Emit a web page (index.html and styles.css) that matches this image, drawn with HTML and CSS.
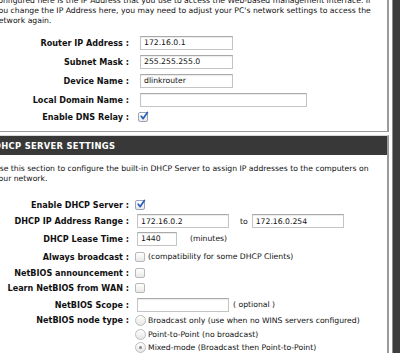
FILE: index.html
```html
<!DOCTYPE html>
<html lang="en">
<head>
  <meta charset="UTF-8" />
  <title>Network Settings</title>
  <link rel="stylesheet" href="styles.css">
</head>
<body>
  <div class="page">
    <div class="box first">
      <p class="intro">Use this section to configure the internal network settings of your router. The IP Address that is<br>configured here is the IP Address that you use to access the Web-based management interface. If<br>you change the IP Address here, you may need to adjust your PC's network settings to access the<br>network again.</p>

      <div class="row tall">
        <label>Router IP Address :</label>
        <input type="text" class="ip" value="172.16.0.1">
      </div>
      <div class="row tall">
        <label>Subnet Mask :</label>
        <input type="text" class="ip" value="255.255.255.0">
      </div>
      <div class="row tall">
        <label>Device Name :</label>
        <input type="text" class="ip" value="dlinkrouter">
      </div>
      <div class="row tall">
        <label>Local Domain Name :</label>
        <input type="text" class="wide" value="">
      </div>
      <div class="row short">
        <label>Enable DNS Relay :</label>
        <span class="chk on"><svg viewBox="0 0 10 10" width="10" height="10"><path d="M2.2 5.2 L4.2 7.6 L8.4 1.4" fill="none" stroke="#2a5fb8" stroke-width="1.7" stroke-linecap="round" stroke-linejoin="round"/></svg></span>
      </div>
    </div>

    <div class="box second">
      <h2>DHCP SERVER SETTINGS</h2>
      <p class="intro">Use this section to configure the built-in DHCP Server to assign IP addresses to the computers on<br>your network.</p>

      <div class="row short">
        <label>Enable DHCP Server :</label>
        <span class="chk on"><svg viewBox="0 0 10 10" width="10" height="10"><path d="M2.2 5.2 L4.2 7.6 L8.4 1.4" fill="none" stroke="#2a5fb8" stroke-width="1.7" stroke-linecap="round" stroke-linejoin="round"/></svg></span>
      </div>
      <div class="row short">
        <label>DHCP IP Address Range :</label>
        <input type="text" class="ip" value="172.16.0.2">
        <span class="note to">to</span>
        <input type="text" class="ip" value="172.16.0.254">
      </div>
      <div class="row tall">
        <label>DHCP Lease Time :</label>
        <input type="text" class="small" value="1440">
        <span class="note mins">(minutes)</span>
      </div>
      <div class="row mid">
        <label>Always broadcast :</label>
        <span class="chk"></span>
        <span class="note">(compatibility for some DHCP Clients)</span>
      </div>
      <div class="row tiny">
        <label>NetBIOS announcement :</label>
        <span class="chk"></span>
      </div>
      <div class="row short">
        <label>Learn NetBIOS from WAN :</label>
        <span class="chk"></span>
      </div>
      <div class="row mid">
        <label>NetBIOS Scope :</label>
        <input type="text" class="ip" value="">
        <span class="note">( optional )</span>
      </div>
      <div class="row top">
        <label>NetBIOS node type :</label>
        <div class="radios">
          <div class="opt"><span class="radio"></span>Broadcast only (use when no WINS servers configured)</div>
          <div class="opt"><span class="radio"></span>Point-to-Point (no broadcast)</div>
          <div class="opt"><span class="radio on"></span>Mixed-mode (Broadcast then Point-to-Point)</div>
        </div>
      </div>
    </div>
  </div>
</body>
</html>
```

FILE: styles.css
```css
body { margin: 0; height: 353px; background: #3d3d3d; overflow: hidden; font-family: "DejaVu Sans", Verdana, sans-serif; font-size: 7.7px; color: #111; }
.page { width: 399px; margin: -16px 0 0 -10px; padding-right: 3px; background: #fff; border-right: 1px solid #8c8c8c; height: 390px; }
.box { border: 1px solid #9a9a9a; border-right-width: 2px; }
.box.first { padding: 0 0 6px 4px; }
.box.second { margin-top: 3px; border-top: 1px solid #d8d8d8; }
.intro { margin: 0; line-height: 10px; white-space: nowrap; }
.box.first .intro { padding-top: 1px; margin-bottom: 7px; margin-left: -1px; }
.box.second .intro { margin: 9px 0 13px 3px; }
h2 { margin: 0; height: 19px; line-height: 20px; padding-left: 3px; background: #383838; color: #fff; font-size: 8.4px; font-weight: bold; letter-spacing: 0.3px; }

.row { display: flex; align-items: center; }
.row.tall { height: 19px; }
.row.mid { height: 17px; }
.row.short { height: 16px; }
.row.tiny { height: 15px; }
.row.top { align-items: flex-start; }
.row label { width: 134px; text-align: right; font-weight: bold; font-size: 8.1px; padding-right: 11px; flex: none; white-space: nowrap; }
.box.second .row label { width: 138px; padding-right: 8px; }
.row.top label { line-height: 14px; }

input { box-sizing: border-box; height: 14px; border: 1px solid #c4c4c4; border-top-color: #a9a9a9; padding: 0 3px; font-family: inherit; font-size: 7.7px; color: #111; box-shadow: inset 0 1px 1px rgba(0,0,0,0.08); outline: none; }
input.ip { width: 93px; }
.box.second input.ip { width: 92px; }
input.wide { width: 167px; }
input.small { width: 40px; }
.note { margin-left: 3px; white-space: nowrap; }
.note.to { margin: 0 4px 0 11px; }
.note.mins { margin-left: 13px; }
input + .note { margin-left: 4px; }

.chk { box-sizing: border-box; width: 10px; height: 10px; margin-left: -2px; border: 1px solid #b8b8b8; border-radius: 2px; background: linear-gradient(#ffffff, #e9e9e9); display: inline-flex; align-items: center; justify-content: center; flex: none; }
.chk.on { border-color: #9aa5b5; }
.chk svg { display: block; margin-top: -2px; margin-left: 1px; overflow: visible; }

.radios { display: flex; flex-direction: column; margin-left: -2px; }
.opt { height: 14px; display: flex; align-items: center; white-space: nowrap; }
.opt:last-child { height: 13px; }
.radio { box-sizing: border-box; width: 11px; height: 11px; border: 1px solid #bdbdbd; border-radius: 50%; background: linear-gradient(#ffffff, #e6e6e6); margin-right: 2px; position: relative; flex: none; }
.radio.on::after { content: ""; position: absolute; left: 3px; top: 3px; width: 3px; height: 3px; border-radius: 50%; background: #8a8a8a; }
```
